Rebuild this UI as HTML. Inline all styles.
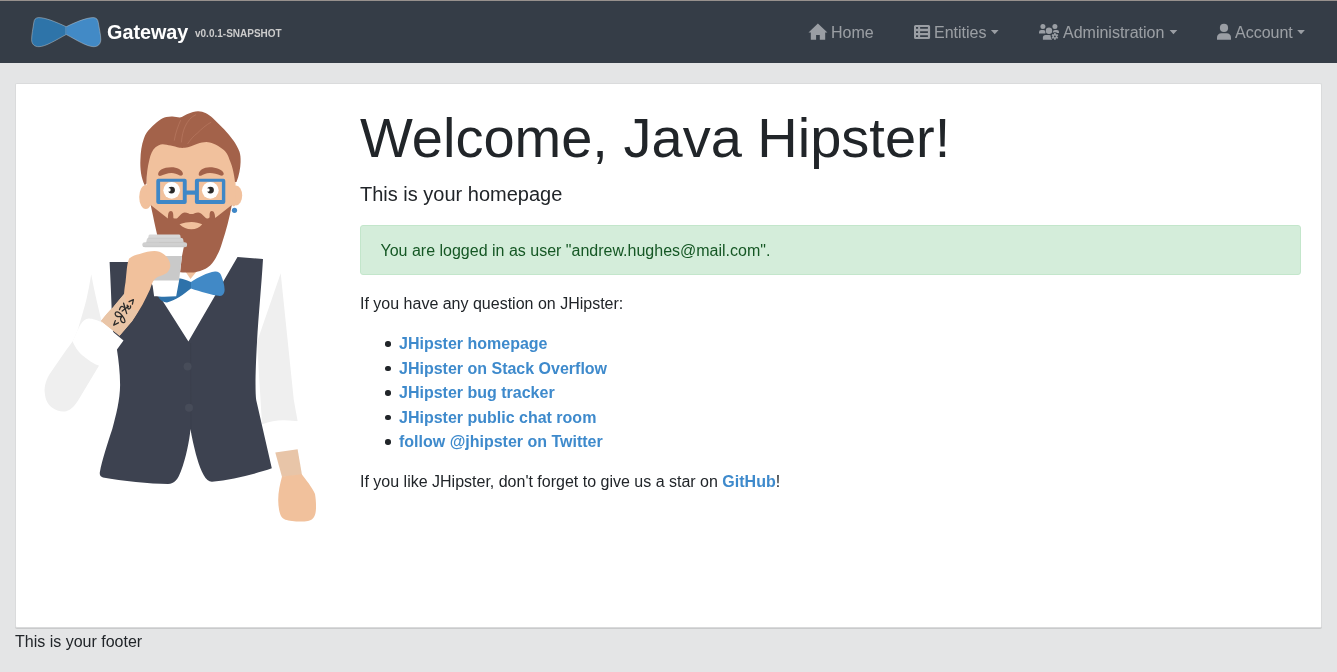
<!DOCTYPE html>
<html><head><meta charset="utf-8">
<style>
*{box-sizing:border-box;}
html,body{margin:0;padding:0;}
body{width:1337px;height:672px;overflow:hidden;background:#e4e5e6;font-family:"Liberation Sans",sans-serif;color:#212529;font-size:16px;line-height:1.5;position:relative;}
.nav{position:absolute;left:0;top:0;width:1337px;height:63px;background:#353d47;border-top:1px solid #97918d;}
.abs{position:absolute;white-space:nowrap;will-change:transform;}
.brand{left:107.2px;top:20.2px;font-size:19.8px;font-weight:bold;color:#fff;line-height:24px;}
.ver{left:194.5px;top:27.5px;font-size:10px;font-weight:bold;color:#ccc;line-height:12px;}
.nl{color:rgba(255,255,255,.5);font-size:16px;line-height:24px;top:21px;}
.caret{display:inline-block;width:0;height:0;border-top:5px solid rgba(255,255,255,.5);border-left:5px solid transparent;border-right:5px solid transparent;vertical-align:3px;margin-left:4px;}
.card{position:absolute;left:15px;top:83px;width:1307px;height:545px;background:#fff;border:1px solid #dadbdc;border-bottom-color:#d9dadb;border-radius:2px;box-shadow:0 1px 0 #c9cacb;}
h1{margin:0;font-weight:normal;font-size:56px;line-height:67px;}
.lead{font-size:20px;line-height:30px;}
.alert{left:360px;top:225px;width:941px;height:50px;background:#d4edda;border:1px solid #c3e6cb;border-radius:3px;color:#155724;padding:13px 19.5px;}
a{color:#3e8acc;font-weight:bold;text-decoration:none;}
ul{margin:0;padding:0;list-style:none;}
li{position:relative;line-height:24.5px;}
li:before{content:"";position:absolute;left:-13.8px;top:9.3px;width:5.6px;height:5.6px;border-radius:50%;background:#212529;}
.foot{left:15px;top:630px;color:#212529;}
</style></head>
<body>
<div class="nav"></div>
<svg class="abs" style="left:0;top:0" width="110" height="60" viewBox="0 0 110 60">
  <path d="M66.2,26.7 C55,21.5 45,17.5 38.5,17.6 C35.5,17.7 34.2,19.5 33.8,22.5 C33,28.5 31.6,34.5 31.6,39.5 C31.6,44.2 34.5,46.8 39,46.7 C46,46.5 56,40 66.2,34.5 Z" fill="#2e74a9" stroke="rgba(210,210,210,.55)" stroke-width=".8"/>
  <path d="M66.2,26.7 C77,21.5 87,17.5 93.5,17.6 C96.5,17.7 97.8,19.5 98.3,22.5 C99.2,28.5 100.8,34.5 100.8,39.5 C100.8,44.2 97.8,46.8 93.5,46.7 C86.5,46.5 76.5,40 66.2,34.5 Z" fill="#428ac6" stroke="rgba(210,210,210,.55)" stroke-width=".8"/>
  <path d="M66.2,26.7 L66.2,34.5" stroke="#3a80bb" stroke-width="1"/>
</svg>
<div class="abs brand">Gateway</div>
<div class="abs ver">v0.0.1-SNAPSHOT</div>

<svg class="abs" style="left:0;top:0" width="1337" height="60" viewBox="0 0 1337 60">
<g fill="#9a9ea4">
<path d="M817.9,23.6 L827.4,32.4 L825.2,32.4 L825.2,39.8 L819.8,39.8 L819.8,35 L816.1,35 L816.1,39.8 L810.8,39.8 L810.8,32.4 L808.5,32.4 Z"/>
<path fill-rule="evenodd" d="M915.6,24.9 H928.5 Q930.1,24.9 930.1,26.5 V37.4 Q930.1,39 928.5,39 H915.6 Q914,39 914,37.4 V26.5 Q914,24.9 915.6,24.9 Z M916,27.1 V28.8 H918.1 V27.1 Z M920.1,27.1 V28.8 H927.9 V27.1 Z M916,31.2 V32.9 H918.1 V31.2 Z M920.1,31.2 V32.9 H927.9 V31.2 Z M916,35.3 V37 H918.1 V35.3 Z M920.1,35.3 V37 H927.9 V35.3 Z"/>
<circle cx="1042.9" cy="26.4" r="2.5"/>
<path d="M1039,33.6 V32.2 Q1039,30 1041.2,30 H1043.4 Q1045.4,30 1045.4,32 V33.6 Z"/>
<circle cx="1054.9" cy="26.4" r="2.5"/>
<path d="M1052.9,33 V32 Q1052.9,30 1055,30 H1057 Q1059,30 1059,32 V33 Z"/>
<circle cx="1049" cy="30.7" r="3.2"/>
<path d="M1042.9,39.8 V37.5 Q1042.9,35 1045.6,35 H1049.5 Q1051.9,35 1051.9,37.5 V39.8 Z"/>
<circle cx="1224" cy="27.9" r="4.1"/>
<path d="M1217,39.8 V37.4 C1217,34.9 1218.8,33.2 1221.4,33.2 H1226.6 C1229.2,33.2 1231,34.9 1231,37.4 V39.8 Z"/>
<path d="M1169.6,29.9 H1177.3 L1173.45,34.3 Z M1297.2,29.9 H1304.9 L1301.05,34.3 Z M990.9,29.9 H998.6 L994.75,34.3 Z"/>
</g>
<circle cx="1054.9" cy="36.4" r="4.2" fill="#353d47"/>
<g transform="translate(1054.9 36.4)" fill="#9a9ea4">
<circle r="2.4"/>
<rect x="-0.8" y="-3.4" width="1.6" height="6.8"/>
<rect x="-0.8" y="-3.4" width="1.6" height="6.8" transform="rotate(60)"/>
<rect x="-0.8" y="-3.4" width="1.6" height="6.8" transform="rotate(120)"/>
</g>
<circle cx="1054.9" cy="36.4" r="0.9" fill="#353d47"/>
</svg>
<div class="abs nl" style="left:831px">Home</div>
<div class="abs nl" style="left:934.3px">Entities</div>
<div class="abs nl" style="left:1062.7px">Administration</div>
<div class="abs nl" style="left:1235px">Account</div>

<div class="card"></div>

<div class="abs" style="left:359.7px;top:104px"><h1>Welcome, Java Hipster!</h1></div>
<div class="abs lead" style="left:359.8px;top:179px">This is your homepage</div>
<div class="abs alert">You are logged in as user "andrew.hughes@mail.com".</div>
<div class="abs" style="left:359.8px;top:292px">If you have any question on JHipster:</div>
<ul class="abs" style="left:399.1px;top:332px">
<li><a>JHipster homepage</a></li>
<li><a>JHipster on Stack Overflow</a></li>
<li><a>JHipster bug tracker</a></li>
<li><a>JHipster public chat room</a></li>
<li><a>follow @jhipster on Twitter</a></li>
</ul>
<div class="abs" style="left:359.8px;top:470.3px">If you like JHipster, don't forget to give us a star on <a>GitHub</a>!</div>
<div class="abs foot">This is your footer</div>

<!-- hipster -->
<svg class="abs" style="left:0;top:0" width="340" height="600" viewBox="0 0 340 600">
<!-- sleeves -->
<path fill="#efefef" d="M91.2,274.3 C89,288 87,298 85,305 C82.5,314 80,322 77.7,330 C76,334 74.5,338 72.5,341.5 C68.5,347 64,353 60,359 L49.5,374.3 C45.5,381 44,388 44.8,393.3 C45.5,400 48,404.5 51.9,407.6 C56.5,411 61.5,412 66.2,411.2 C71,410 75,405.5 78.1,400.5 L100,364 L104,330 C99,312 94.5,292 91.2,274.3 Z"/>
<path fill="#efefef" d="M280.7,273.3 L293.8,400 L297.6,421 L262,424 L257,342 Z"/>
<!-- right cuff -->
<path fill="#ffffff" d="M262,424.6 C270,421 278,420 284,420.2 C290,420.4 295,420.8 297.6,421.3 L303,442.5 L290,452 L270,452 Z"/>
<!-- right wrist & hand -->
<path fill="#e8c5a8" d="M275.3,452.5 L297.6,449.2 L302,474.9 L282,477 Z"/>
<path fill="#f1c19c" d="M282,476.5 L301.8,474.3 C306,480 312,487 315,494 C316,500 316.5,508 315.5,513 C314.5,517.5 312.5,520 308,521 C303,521.8 297,521.6 292,521 C287,520.5 283,519.5 281,516 C279,512 278.3,506 278.2,500 C278.2,492 280,484 282,476.5 Z"/>
<!-- vest -->
<path fill="#3d4250" d="M109.6,262 L137.9,262 L188.4,341.6 L237.5,257 L263,259 C261.5,285 258.5,315 257,342 C255.5,370 255,390 256.2,400 L271.8,468.3 C255,474 232,480 212,481.8 C206,482 201,472 197,458 C194,447 191.5,436 190.5,429 C189.5,440 186,458 181,471 C178,479 174.5,484 168,484 C150,484 122,481 103,477.5 C100.5,477 99.5,475 99.8,472.5 C102,460 108,442 112.3,429 C116,415 120,400 120.1,385 C120.1,372 118.5,360 117,350 C115,340 112.5,332 112,321 C111.5,300 110.5,280 109.6,262 Z"/>
<path d="M190.6,343 L191,429" stroke="#393e4b" stroke-width=".7"/>
<circle cx="187.6" cy="366.6" r="4" fill="#474c59"/>
<circle cx="189" cy="407.8" r="4" fill="#474c59"/>
<!-- neck -->
<path fill="#f1c19d" d="M185,271 L197,271 L190.5,279 Z"/>
<!-- face -->
<ellipse cx="145.8" cy="197" rx="6.6" ry="12" fill="#f1c19d"/>
<ellipse cx="236" cy="195.5" rx="6.2" ry="10" fill="#f1c19d"/>
<path fill="#f1c19d" d="M146.5,183.6 C146,165 147,150 152,145 C158,140 165,139 172,140 C180,141 190,139 204,139 C215,139 222,142 227,148 C232,156 234.5,170 235.5,182 L236,200 C236,206 234,208 231.8,205 L225,222 L200,235 L180,235 L158,222 L150.7,205 C148,207 146,205 146,200 Z"/>
<!-- hair -->
<path fill="#a3624a" d="M144.8,185.2 C141,178 140,168 140.4,160 C140.6,152 141.5,145 143.9,138.4 C145.5,134 147.5,131 150.2,128.6 C153,125.5 156,122.5 159.1,120.5 C161.5,118.7 163.8,117.5 166.25,117 C168.5,116.6 170.5,116.4 172.5,116.5 C175,116.6 177.5,117.4 179.6,117.4 C181.5,117.2 183,116.2 185,115.2 C187.5,114 190,112.8 193,112 C195,111.4 196.8,111.1 198.4,111.2 C201,111.4 203.3,112 205.5,113 C208,114.2 210.5,116 212.7,117.9 C216.5,121.5 220.5,125.5 224.3,129.5 C227.5,133 230.5,136.5 233.2,140.2 C235.5,143.5 238,147.5 239.5,151.8 C240.5,155 240.7,158 240.6,162 C240.5,168 239,176 236.5,181.9 L235,182 C234,172 231.5,164 229.6,160 C229,158.5 228.7,157 227.9,155.4 C226.5,152.8 224.8,150.8 222.5,149.1 C219.7,146.8 216.8,144.8 213.6,143.75 C211,142.8 208.7,142 206.4,142 C203.5,142 200.5,142.8 197.5,143.75 C193,145.2 189,147.8 185,147.8 C183,147.9 181.5,147.9 179.6,147.8 C176.5,147.2 173.5,145.9 170.7,145.5 C168,145 165.2,144.2 162.7,144.2 C160,144.5 157.5,145.5 155.5,147.3 C152.5,150 150.5,154.5 149.3,160 C147.5,167 146.5,175 146.5,183.6 Z"/>
<g stroke="#b7775f" stroke-width=".75" fill="none" stroke-linecap="round">
<path d="M174.3,140.2 C175.5,133 178,126 180.5,120.5"/>
<path d="M181.4,142 C182,136 183,131 185,126.8 C187.5,121 191,117 195.7,114.7"/>
<path d="M187.7,143.75 C190.5,139.5 193.5,136 197.5,133 C201.5,129 206,125 210.9,122.3"/>
</g>
<!-- brows -->
<path fill="#a3624a" d="M158.1,174 C158.5,170.5 163,167.3 171.3,167.3 C177,167.3 182.5,170 182.9,173.5 C183.1,175.3 181.5,176 179.8,175.5 C177,174 174,172.9 171.3,173 C167.5,173 164,174.5 161.5,175.6 C159.6,176.3 158,175.8 158.1,174 Z"/>
<path fill="#a3624a" d="M198.7,174 C199.1,170.5 203.5,167.3 209.6,167.3 C216,167.3 223.3,170 223.7,173.5 C223.9,175.3 222.3,176 220.6,175.5 C217.5,174 213,172.9 209.6,173 C206,173 203,174.5 201.5,175.5 C199.8,176.3 198.6,175.8 198.7,174 Z"/>
<!-- glasses -->
<path fill="#3e87c7" fill-rule="evenodd" d="M158.3,178.7 H184.7 Q186.7,178.7 186.7,180.7 V201.9 Q186.7,203.9 184.7,203.9 H158.3 Q156.3,203.9 156.3,201.9 V180.7 Q156.3,178.7 158.3,178.7 Z M160.1,181.8 V200.1 H182.8 V181.8 Z"/>
<path fill="#3e87c7" fill-rule="evenodd" d="M196.9,178.7 H223.3 Q225.3,178.7 225.3,180.7 V201.9 Q225.3,203.9 223.3,203.9 H196.9 Q194.9,203.9 194.9,201.9 V180.7 Q194.9,178.7 196.9,178.7 Z M198.9,181.8 V200.1 H221.9 V181.8 Z"/>
<rect x="186" y="190.5" width="9.5" height="4.2" fill="#3e87c7"/>
<circle cx="171.7" cy="190.3" r="8.35" fill="#fff"/>
<circle cx="210.3" cy="190.3" r="8.35" fill="#fff"/>
<circle cx="171.5" cy="190.1" r="3.45" fill="#2a2a2a"/>
<circle cx="210.45" cy="190.1" r="3.45" fill="#2a2a2a"/>
<circle cx="168.9" cy="189.9" r="1.8" fill="#fff"/>
<circle cx="207.9" cy="190.0" r="1.8" fill="#fff"/>
<!-- beard -->
<path fill="#a3624a" d="M150.7,205 L167.9,218.6 C167.9,214 168.5,211 170.9,211 C173.2,211 173.4,214 173.4,218.2 C174,218.3 175.5,218.6 176.6,218.5 C179,217 181.5,212.4 184.7,212.4 C187.5,212.4 189,214.1 191.4,214.1 C193.8,214.1 195.5,212.4 198.2,212.4 C201.5,212.4 204,217 206.9,218.5 C208,218.6 209,218.2 209.6,217.2 C209.4,213.5 209.8,211 211.8,211 C214.3,211 215,214.5 215.2,218 L231.8,205 C229.5,218 226,231 222.5,241.5 C220.5,248 219,252 217,255.5 C215.5,258.5 214,261 212.2,263.2 C209.5,266.5 206.5,268.5 203.2,269.7 C199,271.5 195,272.6 191,272.6 C187,272.6 183.5,272.5 180.3,272.2 C174,268 166,258 160,245 C157,236 154,220 150.7,205 Z"/>
<path fill="#f1c19d" d="M179.5,224.2 C184,222.6 188,221.9 191.5,221.9 C195.5,222 199.5,223 202.2,224.2 C199.5,227.5 196,229.3 191.4,229.3 C186.8,229.3 183,227.5 179.5,224.2 Z"/>
<circle cx="234.5" cy="210.3" r="2.6" fill="#3e87c7"/>
<!-- bowtie -->
<path fill="#2e72aa" d="M191,282 C185,279.5 180,278 176,278 L158,296 C159,299 162,302 167,302.5 C175,301 184,294 191,288.6 Z"/>
<path fill="#4189c6" d="M191,282 C198,277.5 207,272.5 215,271.5 C218,271.3 220,272.5 221,275 C223,280 224.5,285 224.6,289.5 C224.7,293 223,296 220,296 C212,295.5 200,291.5 191,288.6 Z"/>
<!-- cup -->
<path fill="#fff" d="M148.5,246 L184,246 L182,256 L179,281 L176.2,296.2 C168,296.8 160,296.8 154.1,296.2 L152,281 Z"/>
<path fill="#c9c9c9" d="M150,256 L182,256 L179,280.6 L152.5,280.6 Z"/>
<path fill="#d3d3d3" d="M146.1,242.7 L146.8,239.5 C147,238.5 147.8,238.1 149,238.1 H181 C182.2,238.1 183,238.5 183.2,239.5 L183.8,242.7 Z"/>
<path fill="#d8d8d8" d="M148.1,238.3 L148.6,235.8 C148.8,235 149.5,234.6 150.5,234.6 H178.5 C179.5,234.6 180.2,235 180.4,235.8 L180.8,238.3 Z"/>
<path fill="#d0d0d0" d="M142.3,244.7 C142.3,243 143.3,242.2 145,242.2 H184.5 C186.2,242.2 187.1,243 187.1,244.7 C187.1,246.4 186.2,247.2 184.5,247.2 H145 C143.3,247.2 142.3,246.4 142.3,244.7 Z"/>
<path fill="none" stroke="#c4c4c4" stroke-width=".6" d="M148.3,238.2 H180.6 M146.4,242.4 H183.6 M143,246.3 H186.4"/>
<!-- forearm + hand -->
<path fill="#f1c19c" d="M129.2,258.4 C133,256 136,254.5 139.6,253.9 C145,252 150,251 154.5,251 C158,251 161,252 163.5,253.9 C166.5,256 168.5,259 169.4,261.4 C170.3,263.5 170.5,265.5 170.1,267.3 C169.5,270 168,272 166.4,273.3 C163,275.5 160,276 157.5,277 C155,278.5 153.8,280 153,281.5 C151.5,284.5 150.8,287 150,289.6 C147.5,295 145,300 142.6,304.5 C139,311 135.5,316 132.2,320.9 L119.6,335.8 L101,320.9 C106,315 109,311 112.9,307.5 C116.5,303 120.5,298.5 124,294.1 C124.5,288 125,285 125.5,282.2 C126,277 126.5,272 127,267.3 C127.5,263.5 128.2,260.5 129.2,258.4 Z"/>
<path fill="#e9c5a7" d="M124.8,293.3 C125,300 127,306 131,308.5 C134,310 136,310.4 138.5,310.5 C136.5,314 134.5,317.5 132.2,320.9 L119.6,335.8 L101,320.9 C106,315 109,311 112.9,307.5 C116.5,303 120.5,298.5 124.8,293.3 Z"/>
<g fill="none" stroke="#2b2b2b" stroke-width="1.3" stroke-linecap="round" stroke-linejoin="round">
<path d="M115.3,320.6 L113.7,325.1 L118.4,322.8"/>
<path d="M122.3,315.8 C120,313 117.5,311.2 115.8,312.3 C114.4,313.5 115.5,316 117.5,316.5 C119.5,317 121,316.5 122.3,315.8 C124,318 125.3,320.5 124.8,322 C124.2,323.2 122.2,322.8 121.2,321.2 C120.2,319.5 120.6,317.5 122.3,315.8"/>
<path d="M119.5,309.7 C120,307.5 121,306.3 122,306.3 C123.5,306.3 124.5,307.5 125.3,308.6"/>
<path d="M123.6,303.2 L126.7,313.6"/>
<path d="M122.2,311 L128.6,306.2"/>
<path d="M127.2,305.1 C127.5,308 128.2,309.6 129.5,308.8 C130.4,308.2 130.8,307 130.6,305.8"/>
<path d="M129.1,301.7 L133.4,299.6 L132.4,304.1"/>
</g>
<!-- left cuff -->
<path fill="#fff" d="M89.2,318.5 C91,318.6 93,319 94.4,319.6 C96.5,320.3 98.5,321 100.6,321.7 L123.5,340.4 L116.8,349.8 L100.6,366.5 C97,365 93.5,363.5 90.2,361.25 C86.5,358.5 83.5,356.5 80.8,354 C77.5,350.5 74.5,346 72.5,341.5 L77.7,330 C79.5,326 81.5,322.5 84,320.6 C85.5,319.2 87.5,318.4 89.2,318.5 Z"/>
</svg>

</body></html>
